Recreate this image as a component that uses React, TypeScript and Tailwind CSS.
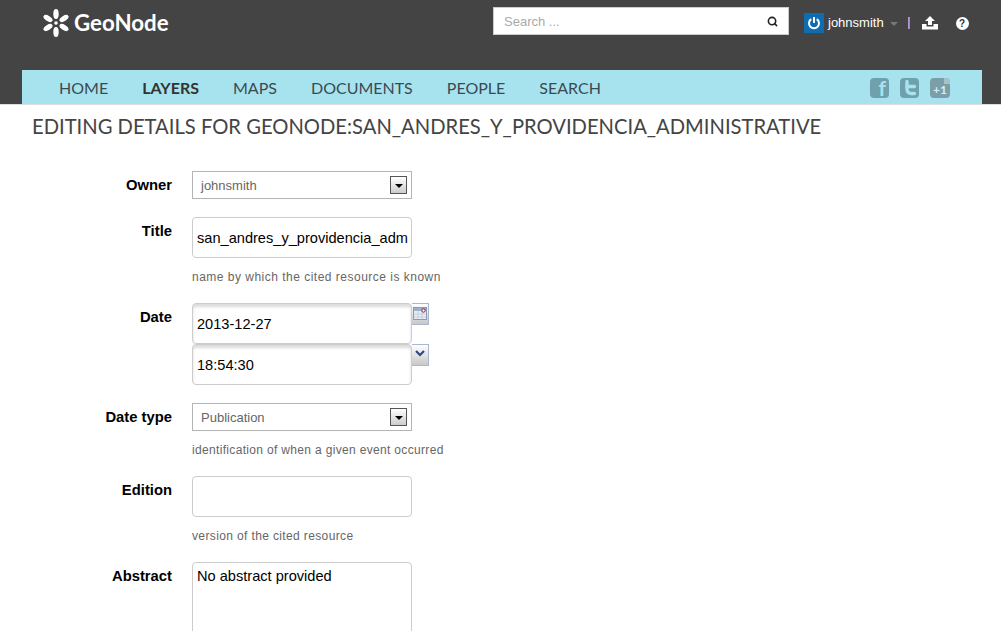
import { Search } from "lucide-react";

const navItems = ["HOME", "LAYERS", "MAPS", "DOCUMENTS", "PEOPLE", "SEARCH"];

function Logo() {
  return (
    <svg width="26" height="28" viewBox="0 0 26 28" className="shrink-0">
      <g fill="#fff">
        <ellipse cx="13" cy="5" rx="2.7" ry="5" />
        <ellipse cx="13" cy="23" rx="2.7" ry="5" />
        <ellipse cx="5" cy="9.5" rx="2.7" ry="5" transform="rotate(-60 5 9.5)" />
        <ellipse cx="21" cy="9.5" rx="2.7" ry="5" transform="rotate(60 21 9.5)" />
        <ellipse cx="5" cy="18.5" rx="2.7" ry="5" transform="rotate(60 5 18.5)" />
        <ellipse cx="21" cy="18.5" rx="2.7" ry="5" transform="rotate(-60 21 18.5)" />
        <circle cx="13" cy="14" r="1.8" />
      </g>
    </svg>
  );
}

function CalendarButton() {
  return (
    <span className="flex h-[22px] w-[17px] justify-center border border-l-0 border-[#a9b8d0] bg-gradient-to-b from-white to-[#c8c8c8] pt-[3px]">
      <svg width="14" height="13" viewBox="0 0 14 13">
        <rect x="0.5" y="0.5" width="13" height="12" fill="#e8eef6" stroke="#8a9ab4" />
        <rect x="1" y="1" width="12" height="3" fill="#9fb0cc" />
        <path d="M1 7h12M1 10h12M5 4v8M9 4v8" stroke="#c6cedc" />
        <circle cx="10.5" cy="3.5" r="1.7" fill="#fff" stroke="#a01020" />
      </svg>
    </span>
  );
}

function ChevronButton() {
  return (
    <span className="flex h-[22px] w-[17px] justify-center border border-l-0 border-[#a9b8d0] bg-gradient-to-b from-white to-[#c8c8c8] pt-[5px]">
      <svg width="10" height="7" viewBox="0 0 10 7">
        <path d="M1 1l4 4 4-4" fill="none" stroke="#2f4a80" strokeWidth="2.2" />
      </svg>
    </span>
  );
}

function SelectBox({ value }: { value: string }) {
  return (
    <div className="flex h-7 w-[220px] items-center justify-between border border-[#b4b4b4] bg-white pl-2 pr-[4px]">
      <span className="pt-px text-[13px] text-[#666]">{value}</span>
      <span className="flex h-[18px] w-[17px] items-center justify-center border border-[#555] bg-gradient-to-b from-white to-[#ccc]">
        <span className="mt-[2px] border-x-[4px] border-t-[4px] border-x-transparent border-t-black" />
      </span>
    </div>
  );
}

function TextBox({ value, shadow }: { value?: string; shadow?: boolean }) {
  return (
    <div
      className={`flex h-[41px] w-[220px] items-center overflow-hidden whitespace-nowrap rounded border border-[#ccc] bg-white px-[4px] pt-[2px] text-[14.6px] text-black ${
        shadow ? "shadow-[inset_0_3px_3px_rgba(0,0,0,0.14)]" : ""
      }`}
    >
      {value}
    </div>
  );
}

function Row({
  label,
  help,
  helpClass,
  first,
  children,
}: {
  label: string;
  help?: string;
  helpClass?: string;
  first?: boolean;
  children: React.ReactNode;
}) {
  return (
    <div className={`flex ${first ? "" : "mt-[18px]"}`}>
      <div className="w-[172px] shrink-0 pt-[4px] text-right text-[14.8px] font-bold leading-[20px] text-black">
        {label}
      </div>
      <div className="ml-5">
        {children}
        {help && <p className={`mt-[11px] text-xs leading-[16px] text-[#666] ${helpClass ?? ""}`}>{help}</p>}
      </div>
    </div>
  );
}

export default function App() {
  return (
    <div className="h-[631px] overflow-hidden bg-white font-['Liberation_Sans',Arial,sans-serif]">
      {/* Header */}
      <header className="h-[105px] border-b border-[#ddd] bg-[#444]">
        <div className="flex h-[70px] items-start">
          <div className="ml-[43px] mt-[8px] flex items-center gap-[5px]">
            <Logo />
            <span className="font-['Lato',sans-serif] text-[22.3px] font-bold leading-[30px] text-white">GeoNode</span>
          </div>
          <div className="ml-auto mt-[7px] flex h-7 w-[296px] items-center justify-between border border-[#ccc] bg-white pl-[10px] pr-[10px]">
            <span className="pt-px text-[13px] text-[#aaa]">Search ...</span>
            <Search size={11} strokeWidth={3.5} className="text-[#222]" />
          </div>
          <div className="ml-[15px] mt-[13px] flex w-[197px] items-center">
            <span className="flex h-5 w-5 items-center justify-center bg-[#0f6cb0]">
              <svg width="14" height="14" viewBox="0 0 14 14" fill="none" stroke="#fff" strokeWidth="2">
                <path d="M4.2 3.2a5 5 0 1 0 5.6 0" />
                <path d="M7 1v6" />
              </svg>
            </span>
            <span className="ml-[4px] text-[13px] text-white">johnsmith</span>
            <span className="ml-[6px] mt-[2px] border-x-[4px] border-t-[4px] border-x-transparent border-t-[#777]" />
            <span className="ml-[10px] h-3 w-[2px] bg-gradient-to-r from-[#a0a0f0] to-[#e06070]" />
            <svg width="16" height="14" viewBox="0 0 16 14" className="ml-[12px]" fill="#fff">
              <path d="M8 0l5 5h-3v4H6V5H3z" />
              <path d="M0 8h4.5v2.5h7V8H16v5.5H0z" />
            </svg>
            <span className="ml-[18px] flex h-[13px] w-[13px] items-center justify-center rounded-full bg-white text-[10px] font-bold text-[#333]">?</span>
          </div>
        </div>
        <div className="ml-[22px] mr-[19px] flex h-[34px] items-center bg-[#a7e3ef] pl-[37px] pr-[32px] font-['Lato',sans-serif] text-[16px] text-[#3b4a52]">
          <nav className="flex gap-[34px] pt-px">
            {navItems.map((item) => (
              <a key={item} className={item === "LAYERS" ? "font-bold text-[#333]" : ""}>
                {item}
              </a>
            ))}
          </nav>
          <div className="ml-auto flex items-center gap-[11px] pt-[2px]">
            <span className="flex h-5 w-[19px] items-end justify-end rounded-sm bg-[#6fa0ab] pr-[3px] text-[21px] font-bold leading-[20px] text-[#a7e3ef]">f</span>
            <span className="flex h-5 w-[19px] items-center justify-center rounded-sm bg-[#6fa0ab]">
              <svg width="19" height="20" viewBox="0 0 19 20" fill="none" stroke="#a7e3ef" strokeWidth="3.4" strokeLinecap="round">
                <path d="M7 3.5v8a4 4 0 0 0 4 4h3.5" />
                <path d="M7 8.5h7.5" />
              </svg>
            </span>
            <span className="relative flex h-5 w-5 items-end justify-center rounded-sm bg-[#7a9fa8] pb-[1px] text-[12px] font-bold leading-[14px] text-[#d4eef3]">
              +1
              <span className="absolute right-0 top-0 h-[6px] w-[6px] rounded-tr-sm bg-[#a3c4cb]" />
            </span>
          </div>
        </div>
      </header>

      {/* Page title */}
      <h1 className="ml-[32px] mt-[8px] font-['Lato',sans-serif] text-[20.2px] font-normal leading-[27px] text-[#444]">
        EDITING DETAILS FOR GEONODE:SAN_ANDRES_Y_PROVIDENCIA_ADMINISTRATIVE
      </h1>

      {/* Form */}
      <form className="mt-[31px]">
        <Row label="Owner" first>
          <SelectBox value="johnsmith" />
        </Row>
        <Row label="Title" help="name by which the cited resource is known" helpClass="tracking-[0.49px]">
          <TextBox value="san_andres_y_providencia_adm" />
        </Row>
        <Row label="Date">
          <div className="flex items-start">
            <TextBox value="2013-12-27" shadow />
            <CalendarButton />
          </div>
          <div className="flex items-start">
            <TextBox value="18:54:30" shadow />
            <ChevronButton />
          </div>
        </Row>
        <Row label="Date type" help="identification of when a given event occurred" helpClass="tracking-[0.33px]">
          <SelectBox value="Publication" />
        </Row>
        <Row label="Edition" help="version of the cited resource" helpClass="tracking-[0.37px]">
          <TextBox />
        </Row>
        <Row label="Abstract">
          <div className="h-[100px] w-[220px] rounded border border-[#ccc] bg-white px-[4px] pt-[4px] text-[14.6px] leading-[18px] text-black">
            No abstract provided
          </div>
        </Row>
      </form>
    </div>
  );
}
